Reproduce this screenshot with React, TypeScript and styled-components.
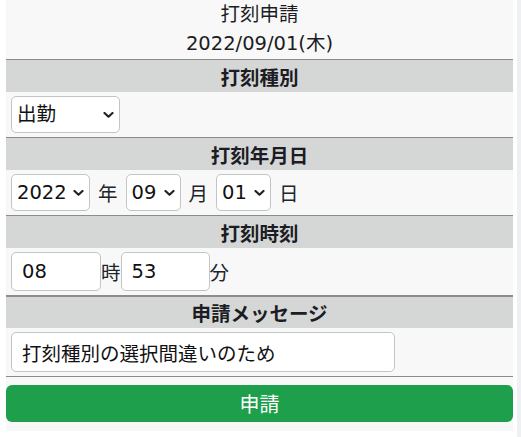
import React, { useState } from 'react';
import styled, { createGlobalStyle } from 'styled-components';

const FONT = `"DejaVu Sans", "Noto Sans CJK JP", "Noto Sans", sans-serif`;

const GlobalStyle = createGlobalStyle`
  html, body, #root {
    height: 100%;
  }
  body {
    margin: 0;
    background: #ffffff;
    font-family: ${FONT};
    color: #212529;
  }
`;

const Chevron = () => (
  <svg width="11" height="7" viewBox="0 0 11 7">
    <path d="M1.5 1.5 L5.5 5.2 L9.5 1.5" fill="none" stroke="#222" strokeWidth="2.2" strokeLinecap="round" strokeLinejoin="round" />
  </svg>
);

interface SelectProps {
  value: string;
  options: string[];
  width: number;
  onChange: (v: string) => void;
}

function DropDown({ value, options, width, onChange }: SelectProps) {
  return (
    <SelectWrap $width={width}>
      <Select value={value} onChange={(e) => onChange(e.target.value)}>
        {options.map((o) => (
          <option key={o} value={o}>
            {o}
          </option>
        ))}
      </Select>
      <ChevronBox>
        <Chevron />
      </ChevronBox>
    </SelectWrap>
  );
}

const pad = (n: number) => String(n).padStart(2, '0');

function App() {
  const [kind, setKind] = useState<string>('出勤');
  const [year, setYear] = useState<string>('2022');
  const [month, setMonth] = useState<string>('09');
  const [day, setDay] = useState<string>('01');
  const [hour, setHour] = useState<string>('08');
  const [minute, setMinute] = useState<string>('53');
  const [message, setMessage] = useState<string>('打刻種別の選択間違いのため');

  const months = Array.from({ length: 12 }, (_, i) => pad(i + 1));
  const days = Array.from({ length: 31 }, (_, i) => pad(i + 1));

  return (
    <Page>
      <GlobalStyle />
      <Panel>
        <Title>
          <div>打刻申請</div>
          <div>2022/09/01(木)</div>
        </Title>

        <SectionHeader>打刻種別</SectionHeader>
        <Row>
          <DropDown value={kind} options={['出勤', '退勤']} width={109} onChange={setKind} />
        </Row>

        <SectionHeader>打刻年月日</SectionHeader>
        <Row $gap={8}>
          <DropDown value={year} options={['2021', '2022', '2023']} width={79} onChange={setYear} />
          <Unit>年</Unit>
          <DropDown value={month} options={months} width={55} onChange={setMonth} />
          <Unit>月</Unit>
          <DropDown value={day} options={days} width={55} onChange={setDay} />
          <Unit>日</Unit>
        </Row>

        <SectionHeader>打刻時刻</SectionHeader>
        <Row>
          <TextInput $width={90} value={hour} onChange={(e) => setHour(e.target.value)} />
          <Unit>時</Unit>
          <TextInput $width={89} value={minute} onChange={(e) => setMinute(e.target.value)} />
          <Unit>分</Unit>
        </Row>

        <SectionHeader $thick>申請メッセージ</SectionHeader>
        <Row $bottomLine>
          <TextInput $width={384} $height={40} value={message} onChange={(e) => setMessage(e.target.value)} />
        </Row>

        <ButtonArea>
          <SubmitButton type="button">申請</SubmitButton>
        </ButtonArea>
      </Panel>
      <ScrollStrip />
    </Page>
  );
}
export default App;

const Page = styled.div`
  display: flex;
  flex-direction: row;
  height: 100%;
`;

const Panel = styled.div`
  width: 507px;
  margin-left: 6px;
  align-self: flex-start;
  background: #f8f8f8;
  display: flex;
  flex-direction: column;
`;

const ScrollStrip = styled.div`
  margin-left: auto;
  width: 4px;
  background: #eef0f4;
`;

const Title = styled.div`
  display: flex;
  flex-direction: column;
  align-items: center;
  font-size: 19.5px;
  line-height: 29px;
  padding-bottom: 1px;
  color: #1c1c24;
`;

const SectionHeader = styled.div<{ $thick?: boolean }>`
  border-top: ${(p) => (p.$thick ? 2 : 1)}px solid #8c8c8c;
  background: #d5d7d7;
  height: ${(p) => (p.$thick ? 31 : 32)}px;
  display: flex;
  align-items: center;
  justify-content: center;
  font-size: 19.5px;
  font-weight: bold;
  color: #1c1c24;
`;

const Row = styled.div<{ $gap?: number; $bottomLine?: boolean }>`
  display: flex;
  flex-direction: row;
  align-items: center;
  gap: ${(p) => p.$gap ?? 0}px;
  padding: 4px 5px;
  min-height: 36px;
  border-bottom: ${(p) => (p.$bottomLine ? '1px solid #8c8c8c' : 'none')};
`;

const SelectWrap = styled.div<{ $width: number }>`
  position: relative;
  width: ${(p) => p.$width}px;
  height: 37px;
`;

const Select = styled.select`
  appearance: none;
  width: 100%;
  height: 100%;
  box-sizing: border-box;
  border: 1px solid #c4c4c4;
  border-radius: 5px;
  background: #ffffff;
  padding: 0 0 0 5px;
  font-family: ${FONT};
  font-size: 19.5px;
  color: #111;
  outline: none;
`;

const ChevronBox = styled.span`
  position: absolute;
  right: 6px;
  top: 50%;
  transform: translateY(-50%);
  display: flex;
  pointer-events: none;
`;

const Unit = styled.span`
  font-size: 19.5px;
  color: #212529;
`;

const TextInput = styled.input<{ $width: number; $height?: number }>`
  width: ${(p) => p.$width}px;
  height: ${(p) => p.$height ?? 39}px;
  box-sizing: border-box;
  border: 1px solid #c4c4c4;
  border-radius: 5px;
  background: #ffffff;
  padding: 0 10px;
  font-family: ${FONT};
  font-size: 19.5px;
  color: #111;
  outline: none;
`;

const ButtonArea = styled.div`
  padding: 8px 0 9px;
`;

const SubmitButton = styled.button`
  width: 100%;
  height: 37px;
  border: none;
  border-radius: 6px;
  background: #1e9f4b;
  color: #ffffff;
  font-family: ${FONT};
  font-size: 20px;
  &:hover {
    cursor: pointer;
  }
`;
